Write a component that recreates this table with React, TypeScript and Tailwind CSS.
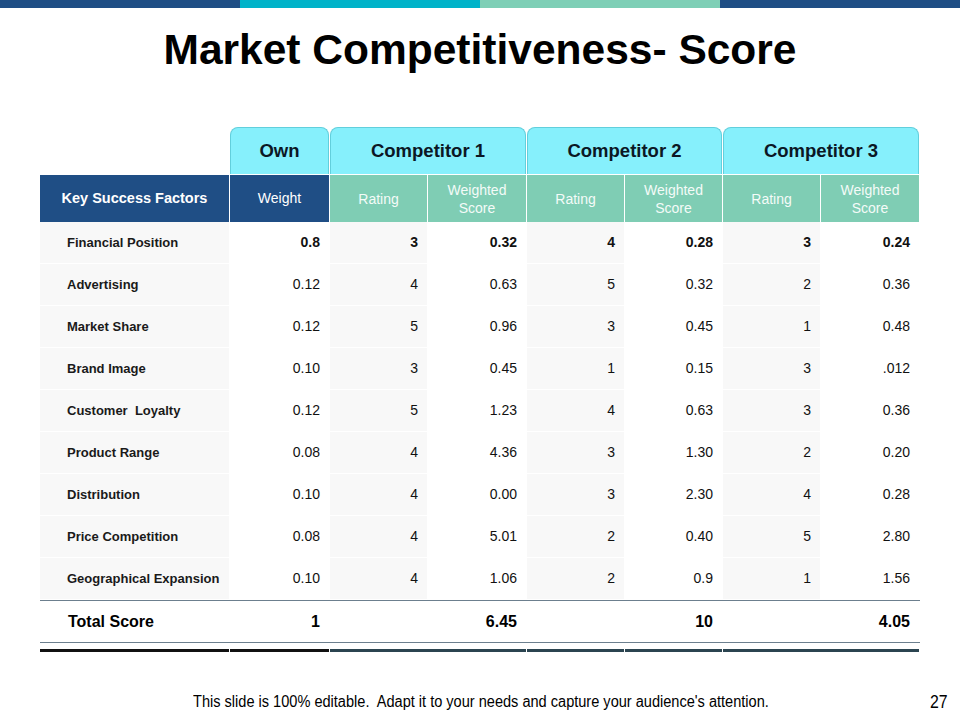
const rows = [
  { name: "Financial Position", w: "0.8", r1: "3", s1: "0.32", r2: "4", s2: "0.28", r3: "3", s3: "0.24", bold: true },
  { name: "Advertising", w: "0.12", r1: "4", s1: "0.63", r2: "5", s2: "0.32", r3: "2", s3: "0.36" },
  { name: "Market Share", w: "0.12", r1: "5", s1: "0.96", r2: "3", s2: "0.45", r3: "1", s3: "0.48" },
  { name: "Brand Image", w: "0.10", r1: "3", s1: "0.45", r2: "1", s2: "0.15", r3: "3", s3: ".012" },
  { name: "Customer  Loyalty", w: "0.12", r1: "5", s1: "1.23", r2: "4", s2: "0.63", r3: "3", s3: "0.36" },
  { name: "Product Range", w: "0.08", r1: "4", s1: "4.36", r2: "3", s2: "1.30", r3: "2", s3: "0.20" },
  { name: "Distribution", w: "0.10", r1: "4", s1: "0.00", r2: "3", s2: "2.30", r3: "4", s3: "0.28" },
  { name: "Price Competition", w: "0.08", r1: "4", s1: "5.01", r2: "2", s2: "0.40", r3: "5", s3: "2.80" },
  { name: "Geographical Expansion", w: "0.10", r1: "4", s1: "1.06", r2: "2", s2: "0.9", r3: "1", s3: "1.56" },
];

const grid = "grid grid-cols-[189px_99px_97px_98px_97px_97px_97px_98px] gap-x-px";

function Tab({ label, span }: { label: string; span: string }) {
  return (
    <div
      className={`${span} flex items-center justify-center rounded-t-lg border border-b-0 border-[#62cfdc] bg-[#86f0fc] text-[18.5px] font-bold text-[#0b1724]`}
    >
      {label}
    </div>
  );
}

function SubHead({ children }: { children: React.ReactNode }) {
  return (
    <div className="flex items-center justify-center bg-[#7fcdb4] text-center text-[14px] leading-[18px] text-[#f4fbf8]">
      {children}
    </div>
  );
}

export default function App() {
  return (
    <div
      className="relative flex h-[720px] w-[960px] flex-col bg-white"
      style={{ fontFamily: '"Liberation Sans", Arial, sans-serif' }}
    >
      <div className="flex h-2">
        <div className="flex-1 bg-[#1f4e85]" />
        <div className="flex-1 bg-[#00b3c9]" />
        <div className="flex-1 bg-[#7ecfb6]" />
        <div className="flex-1 bg-[#1f4e85]" />
      </div>

      <h1 className="mt-[19px] text-center text-[42.5px] font-bold leading-[46px] text-black">
        Market Competitiveness- Score
      </h1>

      <div className="ml-[40px] mt-[54px] w-[880px]">
        {/* tabs */}
        <div className={`${grid} h-[47px]`}>
          <div />
          <Tab label="Own" span="col-span-1" />
          <Tab label="Competitor 1" span="col-span-2" />
          <Tab label="Competitor 2" span="col-span-2" />
          <Tab label="Competitor 3" span="col-span-2" />
        </div>

        {/* sub header */}
        <div className={`${grid} mt-px h-[47px]`}>
          <div className="flex items-center justify-center bg-[#1f4e85] text-[14.5px] font-bold text-white">
            Key Success Factors
          </div>
          <div className="flex items-center justify-center bg-[#1f4e85] text-[14px] text-white">
            Weight
          </div>
          <SubHead>Rating</SubHead>
          <SubHead>
            Weighted
            <br />
            Score
          </SubHead>
          <SubHead>Rating</SubHead>
          <SubHead>
            Weighted
            <br />
            Score
          </SubHead>
          <SubHead>Rating</SubHead>
          <SubHead>
            Weighted
            <br />
            Score
          </SubHead>
        </div>

        {/* data rows */}
        {rows.map((r) => {
          const v = r.bold ? "font-bold" : "";
          const vals = [r.w, r.r1, r.s1, r.r2, r.s2, r.r3, r.s3];
          return (
            <div key={r.name} className={`${grid} h-[42px]`}>
              <div className="flex items-center border-b border-white bg-[#f8f8f8] pl-[27px] text-[13px] font-bold text-[#1a1a1a] whitespace-pre">
                {r.name}
              </div>
              {vals.map((val, i) => (
                <div
                  key={i}
                  className={`flex items-center justify-end border-b border-white pr-[9px] text-[14px] text-[#111] ${v} ${
                    i % 2 === 1 ? "bg-[#f8f8f8]" : "bg-white"
                  }`}
                >
                  {val}
                </div>
              ))}
            </div>
          );
        })}

        {/* total */}
        <div className={`${grid} h-[43px] border-y border-[#6c7f8e] text-[16px] font-bold text-black`}>
          <div className="flex items-center pl-[28px]">Total Score</div>
          <div className="flex items-center justify-end pr-[9px]">1</div>
          <div />
          <div className="flex items-center justify-end pr-[9px]">6.45</div>
          <div />
          <div className="flex items-center justify-end pr-[9px]">10</div>
          <div />
          <div className="flex items-center justify-end pr-[9px]">4.05</div>
        </div>

        <div className={`${grid} mt-[6px] h-[3px]`}>
          <div className="bg-[#111]" />
          <div className="bg-[#111]" />
          <div className="col-span-2 bg-[#2b4450]" />
          <div className="bg-[#2b4450]" />
          <div className="bg-[#2b4450]" />
          <div className="col-span-2 bg-[#2b4450]" />
        </div>
      </div>

      <div className="absolute left-0 top-[690px] flex w-[960px] items-center">
        <p className="ml-[193px] origin-left scale-x-[0.91] whitespace-nowrap text-[16px] text-black">
          This slide is 100% editable.&nbsp; Adapt it to your needs and capture your audience's attention.
        </p>
        <span className="absolute left-[930px] origin-left scale-x-[0.88] text-[18px] text-black">27</span>
      </div>
    </div>
  );
}
